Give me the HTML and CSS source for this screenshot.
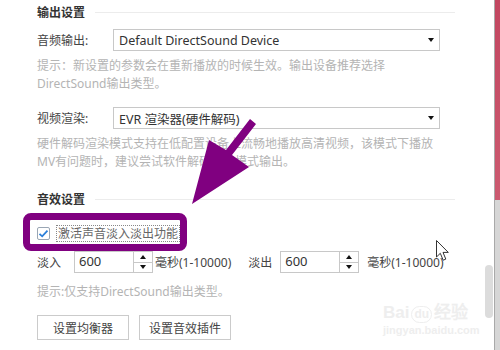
FILE: index.html
```html
<!DOCTYPE html>
<html lang="zh-CN">
<head>
  <meta charset="UTF-8">
  <title>音频设置</title>
  <link rel="stylesheet" href="styles.css">
</head>
<body>
  <div class="window">
    <div class="panel">
      <!-- 输出设置 -->
      <div class="section-title"><span>输出设置</span><i class="rule"></i></div>
      <div class="field">
        <span class="label">音频输出:</span>
        <div class="select"><span>Default DirectSound Device</span><i class="caret"></i></div>
      </div>
      <p class="hint">提示：新设置的参数会在重新播放的时候生效。输出设备推荐选择DirectSound输出类型。</p>
      <div class="field field-video">
        <span class="label">视频渲染:</span>
        <div class="select"><span>EVR 渲染器(硬件解码)</span><i class="caret"></i></div>
      </div>
      <p class="hint">硬件解码渲染模式支持在低配置设备上流畅地播放高清视频，该模式下播放MV有问题时，建议尝试软件解码渲染模式输出。</p>

      <!-- 音效设置 -->
      <div class="section-title section-sound"><span>音效设置</span><i class="rule"></i></div>
      <div class="check-row">
        <span class="checkbox">
          <svg width="11" height="11" viewBox="0 0 11 11"><path d="M1.5 5.8 L4.2 8.3 L9.5 2.6" fill="none" stroke="#2b7fd9" stroke-width="1.8"/></svg>
        </span>
        <span class="check-text">激活声音淡入淡出功能</span>
        <i class="highlight"></i>
      </div>
      <div class="spin-row">
        <span class="spin-label">淡入</span>
        <div class="spin">
          <span class="spin-value">600</span>
          <span class="spin-buttons"><i class="up"></i><i class="down"></i></span>
        </div>
        <span class="unit">毫秒(1-10000)</span>
        <span class="spin-label spin-label-out">淡出</span>
        <div class="spin">
          <span class="spin-value">600</span>
          <span class="spin-buttons"><i class="up"></i><i class="down"></i></span>
        </div>
        <span class="unit unit-out">毫秒(1-10000)</span>
      </div>
      <p class="hint hint-short">提示:仅支持DirectSound输出类型。</p>
      <div class="buttons">
        <button>设置均衡器</button>
        <button>设置音效插件</button>
      </div>
    </div>
    <div class="scrollbar"><div class="thumb"></div></div>
    <div class="edge"></div>

    <svg class="arrow" width="500" height="350" viewBox="0 0 500 350">
      <polygon points="250,119 256,124 232,155 249,167 192,204 209,140 226,150" fill="#800080"/>
    </svg>
    <svg class="pointer" width="14" height="22" viewBox="0 0 14 22">
      <path d="M0.5 0.5 V17 L4.3 13.3 L7.2 20.2 L9.8 19.1 L7 12.4 H12.3 Z" fill="#fff" stroke="#333" stroke-width="1"/>
    </svg>
    <div class="watermark">
      <div class="wm-logo">Bai<span class="wm-du">du</span>经验</div>
      <div class="wm-url">jingyan.baidu.com</div>
    </div>
  </div>
</body>
</html>
```

FILE: styles.css
```css
body {
  margin: 0;
  font-family: "Noto Sans", "Noto Sans CJK SC", sans-serif;
  font-size: 12px;
  color: #444;
}

.window {
  position: relative;
  display: flex;
  width: 500px;
  height: 350px;
  overflow: hidden;
  background: #fff;
}

.panel {
  flex: 1;
  padding: 0 29px 0 37px;
}

/* Section titles */
.section-title {
  display: flex;
  align-items: center;
  height: 24px;
  font-weight: bold;
  color: #333;
}

.rule {
  flex: 1;
  margin-left: 10px;
  border-top: 1px solid #ececec;
}

.section-sound {
  margin-top: 16px;
}

/* Select rows */
.field {
  display: flex;
  align-items: center;
  height: 22px;
  margin-top: 5px;
}

.field-video {
  margin-top: 14px;
}

.label {
  width: 76px;
}

.select {
  box-sizing: border-box;
  display: flex;
  align-items: center;
  justify-content: space-between;
  width: 327px;
  height: 22px;
  padding: 0 5px 0 5px;
  border: 1px solid #c8c8c8;
  font-size: 12.5px;
  color: #333;
}

.caret {
  width: 0;
  height: 0;
  border-left: 3.5px solid transparent;
  border-right: 3.5px solid transparent;
  border-top: 4px solid #111;
}

.hint {
  width: 403px;
  margin: 6px 0 0;
  line-height: 18px;
  color: #b4b4b4;
}

/* Checkbox row */
.check-row {
  position: relative;
  box-sizing: border-box;
  display: flex;
  align-items: center;
  height: 38px;
  margin-top: 2px;
  padding-top: 3px;
}

.checkbox {
  box-sizing: border-box;
  display: flex;
  align-items: center;
  justify-content: center;
  width: 13px;
  height: 13px;
  border: 1px solid #9aa6b4;
  border-radius: 2px;
}

.check-text {
  margin-left: 6px;
  padding: 0 1px;
  line-height: 15px;
  border: 1px dotted #888;
  color: #666;
}

.highlight {
  position: absolute;
  left: -14px;
  top: 0;
  box-sizing: border-box;
  width: 164px;
  height: 38px;
  border: 7px solid #800080;
  border-radius: 8px;
}

/* Fade in / out */
.spin-row {
  display: flex;
  align-items: center;
  height: 22px;
}

.spin-label {
  width: 37px;
}

.spin-label-out {
  width: 32px;
  margin-left: 17px;
}

.spin {
  box-sizing: border-box;
  display: flex;
  width: 79px;
  height: 22px;
  border: 1px solid #c8c8c8;
}

.spin-value {
  flex: 1;
  padding-left: 4px;
  line-height: 19px;
  font-size: 13px;
  color: #333;
}

.spin-buttons {
  display: flex;
  flex-direction: column;
  width: 18px;
  border-left: 1px solid #c8c8c8;
}

.spin-buttons i {
  flex: 1;
  display: flex;
  align-items: center;
  justify-content: center;
}

.spin-buttons .down {
  border-top: 1px solid #c8c8c8;
}

.spin-buttons .up::after,
.spin-buttons .down::after {
  content: "";
  border-left: 3.5px solid transparent;
  border-right: 3.5px solid transparent;
}

.spin-buttons .up::after {
  border-bottom: 4px solid #111;
}

.spin-buttons .down::after {
  border-top: 4px solid #111;
}

.unit {
  margin-left: 2px;
}

.unit-out {
  margin-left: 8px;
}

.hint-short {
  margin-top: 10px;
}

/* Buttons */
.buttons {
  display: flex;
  gap: 10px;
  margin-top: 14px;
}

button {
  width: 92px;
  height: 25px;
  padding: 0;
  border: 1px solid #cbcbcb;
  background: #fff;
  font-family: inherit;
  font-size: 12px;
  color: #444;
}

/* Scrollbar and window edge */
.scrollbar {
  width: 10px;
}

.thumb {
  height: 53px;
  margin: 265px 1px 0;
  border-radius: 4px;
  background: #dcdcdc;
}

.edge {
  width: 5px;
  border-left: 1px solid #a9a9a9;
  background: linear-gradient(to bottom, #c24660 0, #cc5a70 200px, #d6d6d6 200px);
}

/* Annotation overlays */
.arrow {
  position: absolute;
  left: 0;
  top: 0;
}

.pointer {
  position: absolute;
  left: 436px;
  top: 240px;
}

.watermark {
  position: absolute;
  left: 383px;
  top: 303px;
  color: #eeeeee;
  font-family: "Liberation Sans", sans-serif;
  font-weight: bold;
}

.wm-logo {
  font-size: 17px;
  line-height: 20px;
}

.wm-du {
  display: inline-block;
  margin: 0 2px;
  padding: 0 2px;
  border-radius: 9px;
  border: 1px solid #eeeeee;
  font-size: 12px;
  line-height: 15px;
}

.wm-url {
  font-size: 11px;
  line-height: 14px;
}
```
